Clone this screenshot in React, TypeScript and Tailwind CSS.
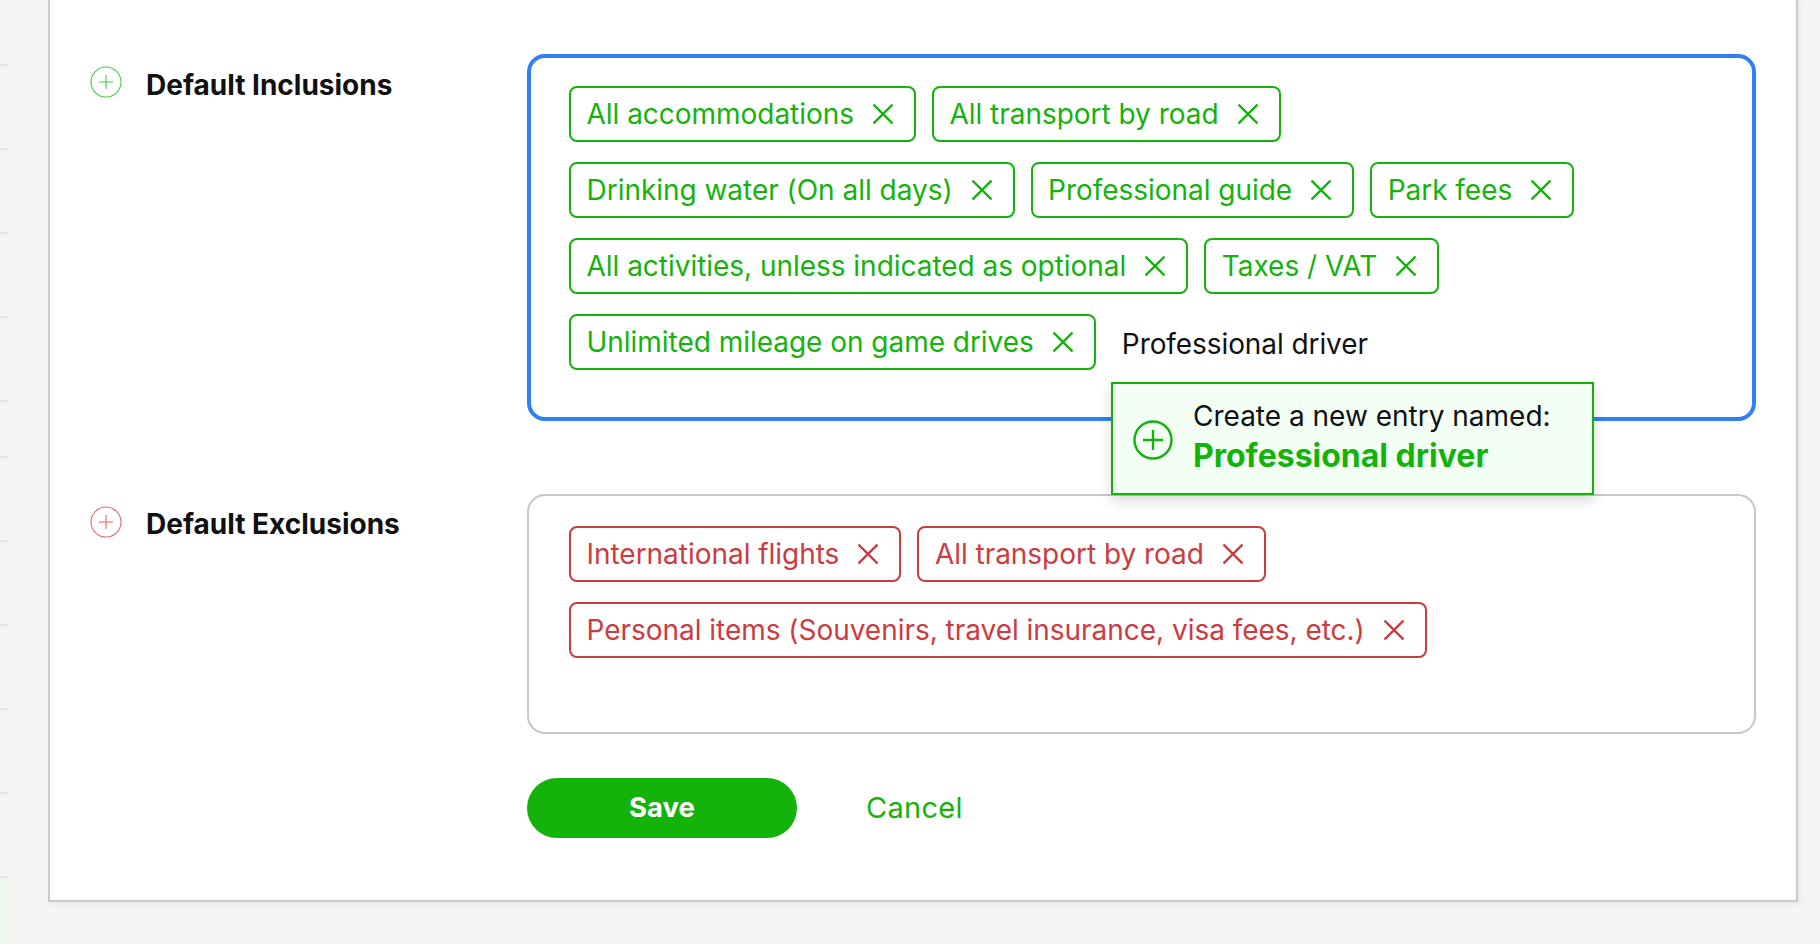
const FONT = "font-['Inter','Liberation_Sans',sans-serif]";

const inclusions = [
  ['All accommodations', 'All transport by road'],
  ['Drinking water (On all days)', 'Professional guide', 'Park fees'],
  ['All activities, unless indicated as optional', 'Taxes / VAT'],
];

const exclusions = [
  ['International flights', 'All transport by road'],
  ['Personal items (Souvenirs, travel insurance, visa fees, etc.)'],
];

function CircledPlus({ className }: { className: string }) {
  return (
    <svg viewBox="0 0 32 32" fill="none" stroke="currentColor" className={className}>
      <circle cx="16" cy="16" r="15" strokeWidth="1.1" />
      <path d="M16 9v14M9 16h14" strokeWidth="1.1" />
    </svg>
  );
}

function Tag({ label, tone }: { label: string; tone: 'green' | 'red' }) {
  return (
    <span
      className={`flex h-[56px] items-center gap-[19px] rounded-[8px] border-2 pl-[15.5px] pr-[21px] text-[28px] ${
        tone === 'green' ? 'border-[#14b30c] text-[#14b30c]' : 'border-[#cc3b3f] text-[#cc3b3f]'
      }`}
    >
      <span className="tracking-[-0.03px]">{label}</span>
      <svg viewBox="0 0 20 20" fill="none" stroke="currentColor" strokeWidth="2.3" className="h-[20px] w-[20px]">
        <path d="M0.5 0.5l19 19M19.5 0.5l-19 19" />
      </svg>
    </span>
  );
}

function Ticks({ count }: { count: number }) {
  return (
    <div className="flex flex-col gap-[82px]">
      {Array.from({ length: count }).map((_, i) => (
        <div key={i} className="h-[2px] w-full bg-[#e6e6e6]" />
      ))}
    </div>
  );
}

export default function App() {
  return (
    <div className={`${FONT} flex h-[944px] w-[1820px] overflow-hidden bg-[#f4f4f4]`}>
      {/* Scroll rail ticks */}
      <div className="flex h-full w-[8px] flex-col pt-[64px]">
        <Ticks count={5} />
        <div className="mt-[54px]">
          <Ticks count={6} />
        </div>
        <div className="flex-1 bg-[#eef8ee]" />
      </div>

      <div className="ml-[40px] h-[902px] w-[1750px] border-x-2 border-b-2 border-[#cacaca] bg-white shadow-[2px_2px_4px_rgba(0,0,0,0.05)]">
        <div className="grid grid-cols-[477px_1229px] pt-[54px]">
          {/* Inclusions */}
          <div className="flex items-start gap-[24px] pl-[40px] pt-[12px]">
            <CircledPlus className="h-[32px] w-[32px] text-[#45c94b]" />
            <span className="mt-[2px] text-[28px] leading-[34px] font-bold text-[#111]">Default Inclusions</span>
          </div>
          <div className="relative h-[367px] rounded-[18px] border-[4px] border-[#2f7ff5] pl-[38px] pt-[28px]">
            <div className="flex flex-col gap-[20px]">
              {inclusions.map((row, i) => (
                <div key={i} className="flex gap-[16px]">
                  {row.map((t) => (
                    <Tag key={t} label={t} tone="green" />
                  ))}
                </div>
              ))}
              <div className="flex items-center gap-[26px]">
                <Tag label="Unlimited mileage on game drives" tone="green" />
                <span className="mt-[3px] text-[28px] tracking-[-0.08px] text-[#111]">Professional driver</span>
              </div>
            </div>
            {/* Create-entry popover */}
            <div className="absolute left-[580px] top-[324px] z-10 flex h-[113px] w-[483px] items-center gap-[20px] border-2 border-[#14b30c] bg-[#f3fff5] pl-[20px] shadow-[0_6px_12px_rgba(0,0,0,0.15)]">
              <svg viewBox="0 0 40 40" fill="none" stroke="#14b30c" strokeWidth="2.4" className="mt-[2px] h-[40px] w-[40px]">
                <circle cx="20" cy="20" r="18.5" />
                <path d="M20 10v20M10 20h20" />
              </svg>
              <div className="mb-[5px] flex flex-col">
                <span className="text-[28px] leading-[38px] text-[#111]">Create a new entry named:</span>
                <span className="mt-[1px] text-[32px] leading-[40px] font-bold text-[#14b30c]">Professional driver</span>
              </div>
            </div>
          </div>

          {/* Exclusions */}
          <div className="mt-[73px] flex items-start gap-[24px] pl-[40px] pt-[12px]">
            <CircledPlus className="h-[32px] w-[32px] text-[#e0696d]" />
            <span className="mt-[1px] text-[28px] leading-[34px] font-bold text-[#111]">Default Exclusions</span>
          </div>
          <div className="mt-[73px] h-[240px] rounded-[18px] border-2 border-[#c8c8c8] pl-[40px] pt-[30px]">
            <div className="flex flex-col gap-[20px]">
              {exclusions.map((row, i) => (
                <div key={i} className="flex gap-[16px]">
                  {row.map((t) => (
                    <Tag key={t} label={t} tone="red" />
                  ))}
                </div>
              ))}
            </div>
          </div>

          {/* Actions */}
          <div />
          <div className="mt-[44px] flex items-center gap-[69px]">
            <button className="h-[60px] w-[270px] rounded-full bg-[#14b30c] text-[27.5px] font-bold text-white">Save</button>
            <span className="text-[29px] tracking-[0.3px] text-[#14b30c]">Cancel</span>
          </div>
        </div>
      </div>
    </div>
  );
}
